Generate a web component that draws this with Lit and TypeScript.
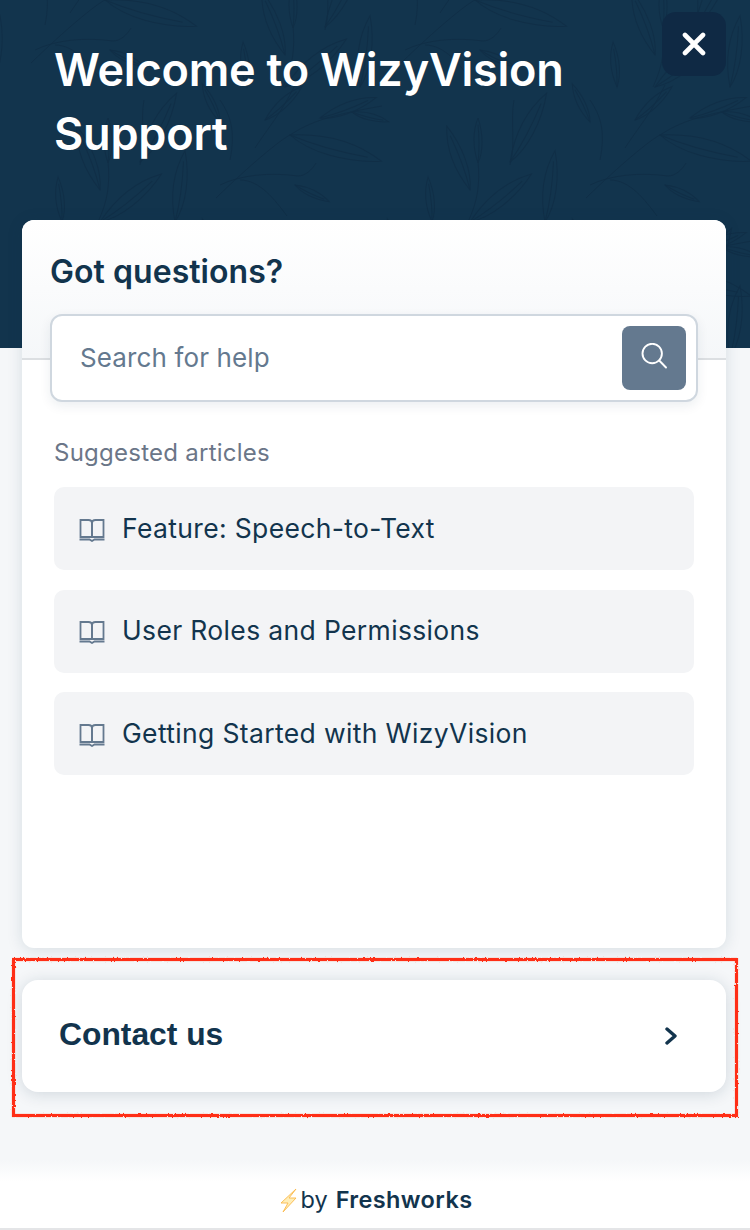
import { LitElement, html, css, svg } from "lit";
import { customElement } from "lit/decorators.js";

const leaf = (x: number, y: number, a: number, l: number) => {
  const w = l * 0.12;
  return svg`<g transform="translate(${x} ${y}) rotate(${a})"><path d="M0 0C${w} ${-l * 0.25} ${w} ${-l * 0.65} 0 ${-l}C${-w} ${-l * 0.7} ${-w} ${-l * 0.35} 0 0Z"/><path d="M0 0C${w * 0.3} ${-l * 0.3} ${w * 0.2} ${-l * 0.6} 0 ${-l * 0.85}"/></g>`;
};

const motif = svg`
  <path d="M586 198C620 165 650 140 660 135C680 122 700 115 752 106"/>
  <path d="M590 185C610 175 640 172 668 176C675 176 682 170 686 163"/>
  <path d="M610 180C630 180 645 200 657 216"/>
  <path d="M600 160C606 130 600 115 590 100"/>
  <path d="M625 148C640 125 650 115 665 85"/>
  ${leaf(660, 135, 106, 95)}
  ${leaf(665, 185, 116, 38)}
  ${leaf(590, 122, -25, 42)}
  ${leaf(635, 120, 48, 50)}
  ${leaf(690, 118, 70, 60)}
  ${leaf(722, 112, 105, 38)}
  <path d="M468 222C478 200 480 185 478 160"/>
  <path d="M510 165C516 145 510 120 514 100"/>
  ${leaf(478, 163, 0, 45)}
  ${leaf(470, 190, -20, 68)}
  ${leaf(510, 162, 28, 78)}
  ${leaf(545, 222, 8, 72)}
  ${leaf(470, 222, 52, 78)}
  ${leaf(432, 222, -5, 45)}
`;
const offsets: [number, number][] = [[0, 0], [-370, 0], [-185, -135], [185, -135], [-555, -135], [0, 135], [-370, 135], [185, 135], [-185, 135]];

const book = html`<svg class="book" viewBox="0 0 26 24" width="26" height="24" fill="none" stroke="currentColor" stroke-width="1.8">
  <path d="M1.5 2H9.5Q13 2 13 5V19H1.5Z"/><path d="M24.5 2H16.5Q13 2 13 5V19H24.5Z"/><path d="M0.5 21.5H10.5L13 23L15.5 21.5H25.5"/></svg>`;

const articles = ["Feature: Speech-to-Text", "User Roles and Permissions", "Getting Started with WizyVision"];

@customElement("app-root")
export class AppRoot extends LitElement {
  static styles = css`
    :host { display: block; position: relative; width: 750px; height: 1230px; overflow: hidden; background: #f5f7f9; font-family: Inter, "Liberation Sans", sans-serif; color: #12344d; }
    .page { display: flex; flex-direction: column; height: 1230px; }
    .hero { position: relative; height: 348px; flex: none; background: #12344d; overflow: hidden; }
    .leaves { position: absolute; inset: 0; fill: none; stroke: #0f2a42; stroke-width: 1; opacity: 0.55; }
    .hero-row { position: relative; display: flex; justify-content: space-between; align-items: flex-start; padding: 12px 24px 0 54px; }
    h1 { margin: 26px 0 0; width: 560px; font-size: 45px; line-height: 64px; font-weight: 600; color: #fff; letter-spacing: -0.2px; }
    .close { flex: none; width: 64px; height: 64px; border: 0; padding: 0; border-radius: 14px; background: #0f2944; display: flex; align-items: center; justify-content: center; }
    .main { display: flex; flex-direction: column; flex: 1; margin-top: -128px; padding: 0 24px 0 22px; position: relative; min-height: 0; }
    .card { height: 728px; flex: none; background: #fff; border-radius: 12px; box-shadow: 0 2px 16px rgba(18, 52, 77, 0.13); position: relative; }
    .card-top { height: 140px; box-sizing: border-box; border-bottom: 2px solid #dcdfe2; border-radius: 12px 12px 0 0; background: linear-gradient(#fff, #f5f7f9); padding: 34px 28px 0; }
    h2 { margin: 0; font-size: 32px; line-height: 36px; font-weight: 600; letter-spacing: 0.05px; }
    .search { position: absolute; left: 28px; right: 28px; top: 94px; height: 88px; box-sizing: border-box; display: flex; align-items: center; justify-content: space-between; padding: 0 10px 0 28px; background: #fff; border: 2px solid #cfd7df; border-radius: 12px; box-shadow: 0 4px 12px rgba(18, 52, 77, 0.08); }
    .placeholder { font-size: 26px; letter-spacing: 0.13px; color: #64798f; margin-top: -2px; }
    .go { width: 64px; height: 64px; background: #64798f; border: 0; padding: 0; border-radius: 8px; display: flex; align-items: center; justify-content: center; }
    .go svg { margin: 0 1px 4px 0; }
    .body { padding: 78px 32px 0; }
    .label { font-size: 24px; line-height: 30px; color: #6b7688; font-weight: 400; letter-spacing: 0.25px; }
    .list { display: flex; flex-direction: column; gap: 19.5px; margin-top: 19px; }
    .item { height: 83px; box-sizing: border-box; padding: 0 0 2px 25px; display: flex; align-items: center; gap: 17px; background: #f3f4f6; border-radius: 10px; font-size: 26.5px; letter-spacing: 0.35px; color: #12344d; }
    .book { color: #64798f; flex: none; margin-top: 4px; }
    .contact { margin-top: 32px; height: 112px; flex: none; display: flex; align-items: center; justify-content: space-between; padding: 0 48px 0 37px; background: #fff; border-radius: 16px; box-shadow: 0 2px 16px rgba(18, 52, 77, 0.16); font-family: "Liberation Sans", Arial, sans-serif; font-weight: 700; font-size: 31.8px; }
    .contact span { margin-top: -4px; }
    .footer { margin-top: auto; flex: none; height: 56px; padding-bottom: 3px; background: #fff; border-bottom: 2px solid #e4e5e7; box-sizing: border-box; display: flex; align-items: center; justify-content: center; gap: 1px; font-size: 23.5px; position: relative; }
    .footer::before { content: ""; position: absolute; left: 0; right: 0; top: -14px; height: 22px; background: linear-gradient(#f5f7f9, #fff); }
    .footer > * { position: relative; }
    .footer b { font-weight: 600; margin-left: 8px; letter-spacing: 0.38px; }
    .mark { position: absolute; left: 9px; top: 955px; width: 732px; height: 165px; pointer-events: none; fill: none; stroke: #ff2d12; stroke-width: 3.2; }
  `;

  render() {
    return html`
      <div class="page">
        <header class="hero">
          <svg class="leaves" viewBox="0 0 750 348" width="750" height="348">${offsets.map(([x, y]) => svg`<g transform="translate(${x} ${y})">${motif}</g>`)}</svg>
          <div class="hero-row">
            <h1>Welcome to WizyVision Support</h1>
            <button class="close" aria-label="Close">
              <svg width="24" height="24" viewBox="0 0 24 24" fill="none" stroke="#fff" stroke-width="4.6" stroke-linecap="round"><path d="M3 3L21 21M21 3L3 21"/></svg>
            </button>
          </div>
        </header>
        <main class="main">
          <section class="card">
            <div class="card-top"><h2>Got questions?</h2></div>
            <div class="search">
              <span class="placeholder">Search for help</span>
              <button class="go" aria-label="Search">
                <svg width="26" height="26" viewBox="0 0 26 26" fill="none" stroke="#fff" stroke-width="1.9"><circle cx="11.2" cy="10.5" r="9.7"/><path d="M18.2 17.5L25 24.5" stroke-linecap="round"/></svg>
              </button>
            </div>
            <div class="body">
              <div class="label">Suggested articles</div>
              <div class="list">${articles.map((a) => html`<div class="item">${book}<span>${a}</span></div>`)}</div>
            </div>
          </section>
          <section class="contact">
            <span>Contact us</span>
            <svg width="14" height="18" viewBox="0 0 14 18" fill="none" stroke="#12344d" stroke-width="3.4" stroke-linecap="round" stroke-linejoin="round"><path d="M3 2L11 9L3 16"/></svg>
          </section>
        </main>
        <footer class="footer">
          <svg width="22" height="24" viewBox="0 0 22 24" fill="#ffeeb8" stroke="#f9b84a" stroke-width="0.9"><path d="M18 1L3 15H10L5 24L18 10H11Z"/></svg>
          <span>by<b>Freshworks</b></span>
        </footer>
      </div>
      <svg class="mark" viewBox="0 0 732 165" width="732" height="165">
        <defs><filter id="rough" x="-2%" y="-5%" width="104%" height="110%"><feTurbulence type="fractalNoise" baseFrequency="0.5" numOctaves="2" seed="4"/><feDisplacementMap in="SourceGraphic" scale="2.5"/></filter></defs>
        <rect x="4.5" y="4.5" width="723" height="156" filter="url(#rough)"/>
      </svg>
    `;
  }
}
